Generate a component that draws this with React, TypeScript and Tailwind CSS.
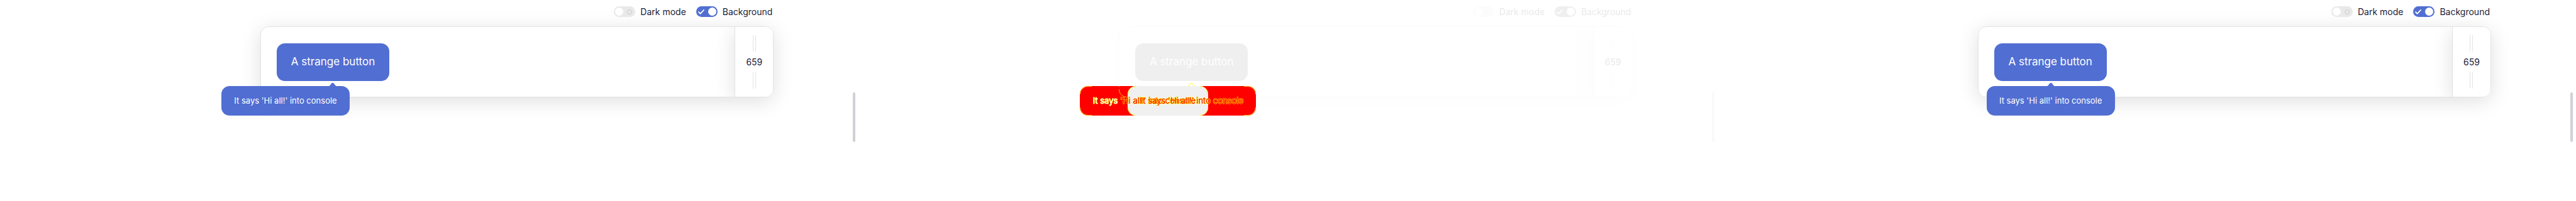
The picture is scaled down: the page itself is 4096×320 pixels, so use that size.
import { ReactNode } from "react";

function Check() {
  return (
    <svg viewBox="0 0 10 8" className="h-2 w-[10px]" fill="none" stroke="white" strokeWidth="1.8" strokeLinecap="round" strokeLinejoin="round">
      <path d="M1 4.2 3.6 6.9 9 1" />
    </svg>
  );
}

function Toggle({ label, checked = false }: { label: string; checked?: boolean }) {
  return (
    <label className="flex items-center gap-2">
      <span className={checked ? "relative flex h-[17px] w-[34px] items-center justify-between rounded-full bg-[#516ed2] pr-0.5 pl-[3px]" : "relative flex h-[17px] w-[34px] items-center justify-between rounded-full bg-[#e9e9e9] pr-[5px] pl-0.5"}>
        <input type="checkbox" defaultChecked={checked} className="absolute inset-0 appearance-none" />
        {checked ? <Check /> : <span className="size-[13px] rounded-full bg-white" />}
        {checked ? <span className="size-[13px] rounded-full bg-white" /> : <span className="size-2 rounded-full border border-[#cccccc]" />}
      </span>
      {label}
    </label>
  );
}

function Grip() {
  return <span className="h-[26px] w-[5px] border-x border-[#e3e3e3]" />;
}

function Playground({ children, faded = false }: { children?: ReactNode; faded?: boolean }) {
  return (
    <section className="relative min-w-0 flex-1">
      <div className={faded ? "flex h-full grayscale opacity-10" : "flex h-full"}>
        <div className="flex min-w-0 flex-1 flex-col pr-[126px] pl-[414px]">
          <div className="flex h-[42px] items-start justify-end gap-4 pt-[10px] pr-0.5 text-sm leading-[17px]">
            <Toggle label="Dark mode" />
            <Toggle label="Background" checked />
          </div>
          <div className="rounded-[13px] shadow-[0_6px_32px_rgba(0,0,0,0.13)]">
            <div className="flex h-[113px] overflow-hidden rounded-[13px] border border-[#e3e3e3] bg-white">
              <div className="flex min-w-0 flex-1 items-center pl-[25px]">
                <button type="button" className="h-[60px] w-[179px] rounded-[13px] bg-[#516ed2] text-[17px] text-white">
                  A strange button
                </button>
              </div>
              <div className="flex w-[61px] flex-col items-center justify-between border-l border-[#e3e3e3] bg-white py-[13px] text-sm shadow-[0_6px_32px_rgba(0,0,0,0.13)]">
                <Grip />
                <output>659</output>
                <Grip />
              </div>
            </div>
          </div>
        </div>
        <div className="mt-[147px] mr-[5px] h-[79px] w-1 rounded-full bg-[#d0d0d7]" />
      </div>
      {children}
    </section>
  );
}

function Arrow() {
  return (
    <svg viewBox="0 0 12 5" className="h-[5px] w-3" fill="#516ed2">
      <path d="M0 5C2 5 3.6 0.5 5 0.3C5.6 0 6.4 0 7 0.3C8.4 0.5 10 5 12 5Z" />
    </svg>
  );
}

function Tooltip() {
  return (
    <div role="tooltip" className="flex h-[47px] w-full items-center justify-center rounded-[13px] bg-[#516ed2] text-[13px] whitespace-nowrap">
      It says 'Hi all!' into console
    </div>
  );
}

function DiffShapes() {
  return (
    <svg viewBox="0 0 280 52" className="absolute inset-0 h-[52px] w-[280px]" fill="none">
      <rect x="0" y="5" width="204" height="47" rx="13" fill="#ff0000" />
      <rect x="76" y="5" width="204" height="47" rx="13" fill="#ff0000" />
      <rect x="76" y="5" width="128" height="47" rx="13" fill="#f0f0f0" />
      <g stroke="#ffff00" strokeWidth="0.8">
        <path d="M0.4 18A12.6 12.6 0 0 1 13 5.4H19M0.4 39A12.6 12.6 0 0 0 13 51.6H19" />
        <path d="M76.4 18A12.6 12.6 0 0 1 89 5.4M76.4 39A12.6 12.6 0 0 0 89 51.6" />
        <path d="M203.6 18A12.6 12.6 0 0 0 191 5.4M203.6 39A12.6 12.6 0 0 1 191 51.6" />
        <path d="M279.6 18A12.6 12.6 0 0 0 267 5.4H261M279.6 39A12.6 12.6 0 0 1 267 51.6H261" />
        <path d="M62.4 5V6M62.4 10C62.6 16.5 66 21.6 74 22.4" />
        <path d="M172 5C173.6 4.6 174.8 1 176.4 0.6H178C179.6 1 180.8 4.6 182.4 5" strokeWidth="1" />
      </g>
    </svg>
  );
}

export default function App() {
  return (
    <main className="flex h-screen overflow-hidden bg-white font-['Inter',sans-serif] text-[#1b1d3a]">
      <Playground>
        <div className="absolute top-[132px] left-[352px] flex w-[204px] flex-col items-end text-white">
          <span className="pr-[21px]">
            <Arrow />
          </span>
          <Tooltip />
        </div>
      </Playground>
      <Playground faded>
        <div className="absolute top-[132px] left-[352px] h-[52px] w-[280px] text-[13px] whitespace-nowrap text-[#ff0000] [paint-order:stroke_fill] [-webkit-text-stroke:1px_#ffff00]">
          <DiffShapes />
          <p className="absolute top-[5px] left-0 flex h-[47px] w-[204px] items-center justify-center">
            <span className="whitespace-pre text-white">It says </span>
            <span>'Hi all!' into console</span>
          </p>
          <p className="absolute top-[5px] right-0 flex h-[47px] w-[204px] items-center justify-center">
            It says 'Hi all!' into console
          </p>
        </div>
      </Playground>
      <Playground>
        <div className="absolute top-[132px] left-[428px] flex w-[204px] flex-col items-center text-white">
          <Arrow />
          <Tooltip />
        </div>
      </Playground>
    </main>
  );
}
